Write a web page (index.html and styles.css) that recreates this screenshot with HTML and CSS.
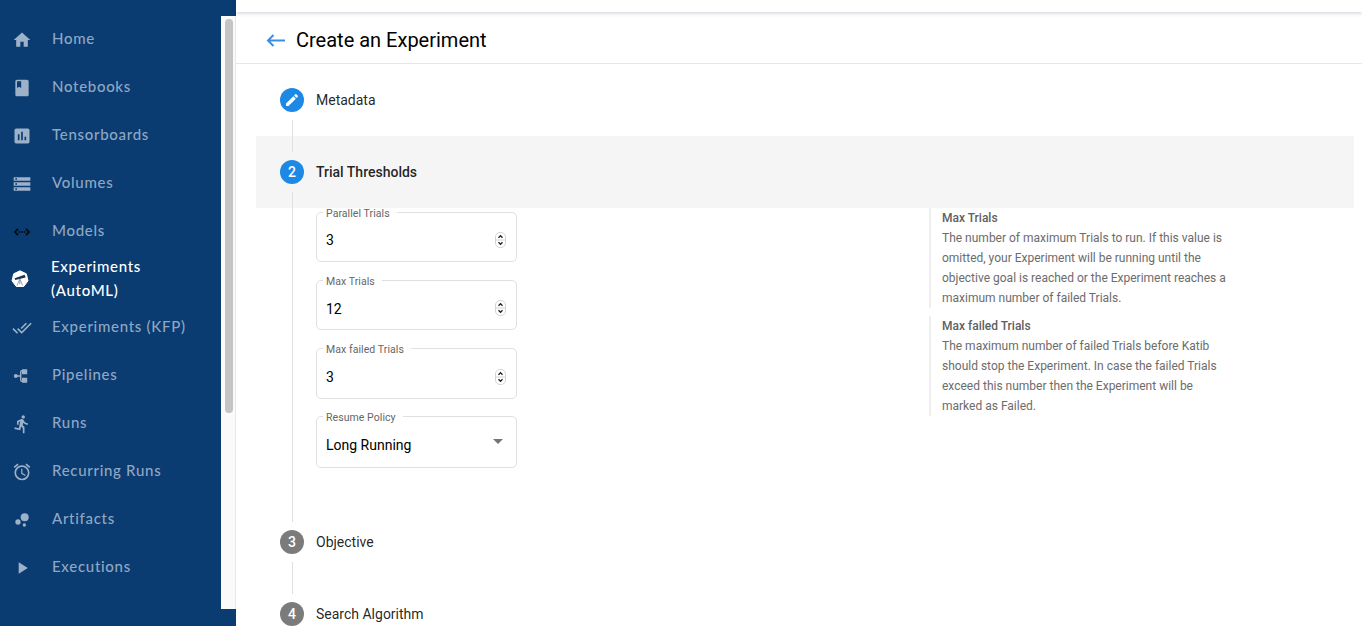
FILE: index.html
```html
<!DOCTYPE html>
<html lang="en">
<head>
<meta charset="utf-8">
<title>Create an Experiment</title>
<link rel="stylesheet" href="styles.css">
</head>
<body>
<div class="app">
  <aside class="sidebar">
    <div class="nav-scroll">
      <nav class="nav">
        <a class="item"><svg class="icon" viewBox="0 0 24 24"><path d="M10 20v-6h4v6h5v-8h3L12 3 2 12h3v8z"/></svg><span>Home</span></a>
        <a class="item"><svg class="icon" viewBox="0 0 24 24"><path d="M18 2H6c-1.100 0-2 .9-2 2v16c0 1.100.9 2 2 2h12c1.100 0 2-.9 2-2V4c0-1.100-.9-2-2-2zM6 4h5v8l-2.500-1.500L6 12V4z"/></svg><span>Notebooks</span></a>
        <a class="item"><svg class="icon" viewBox="0 0 24 24"><path d="M19 3H5c-1.100 0-2 .9-2 2v14c0 1.100.9 2 2 2h14c1.100 0 2-.9 2-2V5c0-1.100-.9-2-2-2zM9 17H7v-7h2v7zm4 0h-2V7h2v10zm4 0h-2v-4h2v4z"/></svg><span>Tensorboards</span></a>
        <a class="item"><svg class="icon" viewBox="0 0 24 24"><path d="M2 20h20v-4H2v4zm2-3h2v2H4v-2zM2 4v4h20V4H2zm4 3H4V5h2v2zm-4 7h20v-4H2v4zm2-3h2v2H4v-2z"/></svg><span>Volumes</span></a>
        <a class="item"><svg class="icon icon-dark" viewBox="0 0 20 20"><path d="M6 6.800 3 10l3 3.200M14 6.800l3 3.200-3 3.200M6.500 10h1.700M9.100 10h1.800M11.800 10h1.700"/></svg><span>Models</span></a>
        <a class="item item-active"><svg class="icon" viewBox="0 0 20 20"><path class="disc" d="M10 1.800l6.300 3 1.700 7-4.300 5.700H6.300L2 11.800l1.700-7z"/><path class="scope" d="M4.600 9.300 14.600 5.700l1 2.700L5.200 11z"/><path class="legs" d="M9.800 10.200 7 16.500M9.800 10.200V15M9.800 10.200l2.900 6.300"/></svg><span>Experiments<br>(AutoML)</span></a>
        <a class="item"><svg class="icon" viewBox="0 0 24 24"><path d="m18 7-1.410-1.410-6.340 6.340 1.410 1.410L18 7zm4.240-1.410L11.660 16.170 7.480 12l-1.410 1.410L11.660 19l12-12-1.420-1.410zM.410 13.410 6 19l1.410-1.410L1.830 12 .410 13.410z"/></svg><span>Experiments (KFP)</span></a>
        <a class="item"><svg class="icon" viewBox="0 0 20 20"><circle cx="3.800" cy="10" r="2"/><path d="M4 9.300h4V6q0-2 2-2V3.200h5.200v5H10V5.500q-.600 0-.600.600v7.800q0 .600.600.600v-2.700h5.200v5H10V16q-2 0-2-2v-3.300H4z"/></svg><span>Pipelines</span></a>
        <a class="item"><svg class="icon" viewBox="0 0 24 24"><path d="M13.490 5.480c1.100 0 2-.9 2-2s-.9-2-2-2-2 .9-2 2 .9 2 2 2zm-3.600 13.900 1-4.400 2.100 2v6h2v-7.500l-2.100-2 .6-3c1.300 1.500 3.300 2.500 5.500 2.500v-2c-1.900 0-3.500-1-4.300-2.400l-1-1.600c-.4-.6-1-1-1.700-1-.3 0-.5.1-.8.1l-5.200 2.200v4.700h2v-3.400l1.800-.7-1.600 8.100-4.900-1-.4 2 7 1.400z"/></svg><span>Runs</span></a>
        <a class="item"><svg class="icon" viewBox="0 0 24 24"><path d="m22 5.720-4.600-3.860-1.290 1.530 4.600 3.860L22 5.720zM7.880 3.390 6.600 1.860 2 5.710l1.290 1.530 4.590-3.850zM12.500 8H11v6l4.750 2.850.75-1.230-4-2.370V8zM12 4c-4.970 0-9 4.030-9 9s4.020 9 9 9a9 9 0 1 0 0-18zm0 16c-3.870 0-7-3.130-7-7s3.130-7 7-7 7 3.130 7 7-3.130 7-7 7z"/></svg><span>Recurring Runs</span></a>
        <a class="item"><svg class="icon" viewBox="0 0 24 24"><circle cx="7.200" cy="14.400" r="3.200"/><circle cx="14.800" cy="18" r="2"/><circle cx="15.200" cy="8.800" r="4.800"/></svg><span>Artifacts</span></a>
        <a class="item"><svg class="icon" viewBox="0 0 24 24"><path d="M8 5v14l11-7z"/></svg><span>Executions</span></a>
      </nav>
      <div class="track"><div class="thumb"></div></div>
    </div>
  </aside>
  <main class="main">
    <div class="topbar"></div>
    <header class="header">
      <svg class="back" viewBox="0 0 20 14"><path d="M19 7.500H2M7.500 2 2 7.500 7.500 13"/></svg>
      <h1>Create an Experiment</h1>
    </header>
    <section class="stepper">
      <div class="step">
        <span class="badge"><svg viewBox="0 0 24 24"><path d="M3 17.250V21h3.750L17.810 9.940l-3.750-3.750L3 17.250zM20.710 7.040c.39-.39.39-1.020 0-1.410l-2.340-2.340c-.39-.39-1.020-.39-1.410 0l-1.830 1.830 3.750 3.750 1.830-1.830z"/></svg></span>
        <span>Metadata</span>
      </div>
      <div class="step step-current"><span class="badge">2</span><span>Trial Thresholds</span></div>
      <div class="content">
        <form class="fields">
          <div class="field"><span class="label">Parallel Trials</span><span class="value">3</span><svg class="spin" viewBox="0 0 11 16"><rect x=".5" y=".5" width="10" height="15" rx="4.500"/><path class="mid" d="M.5 8h10"/><path class="arrow" d="M3.500 5.700l2-2 2 2M3.500 10.300l2 2 2-2"/></svg></div>
          <div class="field field-low"><span class="label">Max Trials</span><span class="value">12</span><svg class="spin spin-up" viewBox="0 0 11 16"><rect x=".5" y=".5" width="10" height="15" rx="4.500"/><path class="mid" d="M.5 8h10"/><path class="arrow" d="M3.500 5.700l2-2 2 2M3.500 10.300l2 2 2-2"/></svg></div>
          <div class="field field-mid"><span class="label">Max failed Trials</span><span class="value">3</span><svg class="spin" viewBox="0 0 11 16"><rect x=".5" y=".5" width="10" height="15" rx="4.500"/><path class="mid" d="M.5 8h10"/><path class="arrow" d="M3.500 5.700l2-2 2 2M3.500 10.300l2 2 2-2"/></svg></div>
          <div class="field field-tall"><span class="label">Resume Policy</span><span class="value">Long Running</span><span class="caret"></span></div>
        </form>
        <div class="notes">
          <div class="note"><b>Max Trials</b><br>The number of maximum Trials to run. If this value is<br>omitted, your Experiment will be running until the<br>objective goal is reached or the Experiment reaches a<br>maximum number of failed Trials.</div>
          <div class="note"><b>Max failed Trials</b><br>The maximum number of failed Trials before Katib<br>should stop the Experiment. In case the failed Trials<br>exceed this number then the Experiment will be<br>marked as Failed.</div>
        </div>
      </div>
      <div class="step step-next"><span class="badge">3</span><span>Objective</span></div>
      <div class="step step-next"><span class="badge">4</span><span>Search Algorithm</span></div>
    </section>
  </main>
</div>
</body>
</html>
```

FILE: styles.css
```css
* { box-sizing: border-box; }
body { margin: 0; font-family: Roboto, sans-serif; color: rgba(0, 0, 0, .87); background: #fff; }
.app { display: flex; height: 626px; overflow: hidden; }

.sidebar { width: 236px; flex: none; padding: 16px 0 17px; background: #0a3b71; }
.nav-scroll { display: flex; height: 593px; overflow: hidden; }
.nav { flex: 1; }
.item { display: flex; align-items: center; gap: 20px; height: 48px; padding-left: 12px; color: #8fa7c3; font: 500 15px/24px Lato, sans-serif; letter-spacing: .7px; }
.item span { margin-top: -4px; }
.icon { width: 20px; height: 20px; flex: none; fill: #9db1c9; }
.icon-dark { fill: none; stroke: #05080d; stroke-width: 1.700; }
.item-active { color: #fff; gap: 21px; padding-left: 10px; }
.item-active .icon { margin-top: -2px; }
.disc { fill: #fff; stroke: #fff; stroke-width: 1; stroke-linejoin: round; }
.scope { fill: #1c3452; }
.legs { fill: none; stroke: #7c8ca0; stroke-width: .8; }
.track { width: 15px; padding: 3px 3px 0 4px; background: #fafafa; border-right: 1px solid #e8e8e8; }
.thumb { width: 8px; height: 394px; border-radius: 4px; background: #c4c4c4; }

.main { flex: 1; min-width: 0; }
.topbar { position: relative; height: 12px; background: #fff; box-shadow: 0 1px 4px rgba(40, 50, 70, .24); }
.header { display: flex; align-items: center; height: 52px; padding: 4px 0 0 30px; border-bottom: 1px solid #e6e6e8; }
.back { width: 20px; height: 14px; margin-right: 10px; fill: none; stroke: #3b8fe0; stroke-width: 2; }
h1 { margin: 0; color: #000; font-size: 20px; line-height: 28px; font-weight: 400; }

.stepper { padding: 0 8px 0 20px; }
.step { position: relative; display: flex; align-items: center; gap: 12px; height: 72px; padding-left: 24px; font-size: 14px; }
.step::before, .step::after { content: ""; position: absolute; left: 36px; width: 1px; height: 16px; background: #e0e0e0; }
.step::before { top: 0; }
.step::after { bottom: 0; }
.step:first-child::before { display: none; }
.step-current { background: #f5f5f5; font-weight: 500; }
.badge { display: flex; align-items: center; justify-content: center; width: 24px; height: 24px; border-radius: 50%; background: #1e88e5; color: #fff; font-size: 14px; font-weight: 500; }
.badge svg { width: 16px; height: 16px; fill: #fff; }
.step-next .badge { background: #7b7b7b; }

.content { display: flex; justify-content: space-between; height: 298px; margin-left: 36px; padding: 4px 124px 0 23px; border-left: 1px solid #e0e0e0; }
.fields { display: grid; grid-auto-rows: 68px; align-items: start; width: 201px; }
.field { position: relative; display: flex; align-items: center; justify-content: space-between; height: 50px; padding: 6px 10px 0 9px; border: 1px solid #e0e0e0; border-radius: 5px; }
.field-low { padding-top: 8px; }
.field-mid { height: 51px; padding-top: 7px; }
.field-tall { height: 52px; padding-right: 11px; }
.label { position: absolute; left: 6px; top: -6px; padding: 0 7px 0 3px; background: linear-gradient(transparent 4px, #fff 4px); color: #666; font-size: 10.500px; line-height: 14px; letter-spacing: .07px; }
.value { font-size: 14px; line-height: 18px; color: #000; }
.spin { width: 11px; height: 16px; fill: #fff; stroke: #d4d4d4; stroke-width: 1; }
.spin-up { margin-top: -2px; }
.spin .arrow { fill: none; stroke: #222; stroke-width: 1.300; }
.caret { margin: -7px 2px 0 0; border: 5px solid transparent; border-top-color: #757575; border-bottom: 0; }
.notes { display: flex; flex-direction: column; gap: 8px; width: 301px; margin-top: -4px; }
.note { padding-left: 11px; border-left: 2px solid #eee; color: #6c6c6c; font-size: 12px; line-height: 20px; white-space: nowrap; }
.note b { font-weight: 500; color: #606060; }
```
